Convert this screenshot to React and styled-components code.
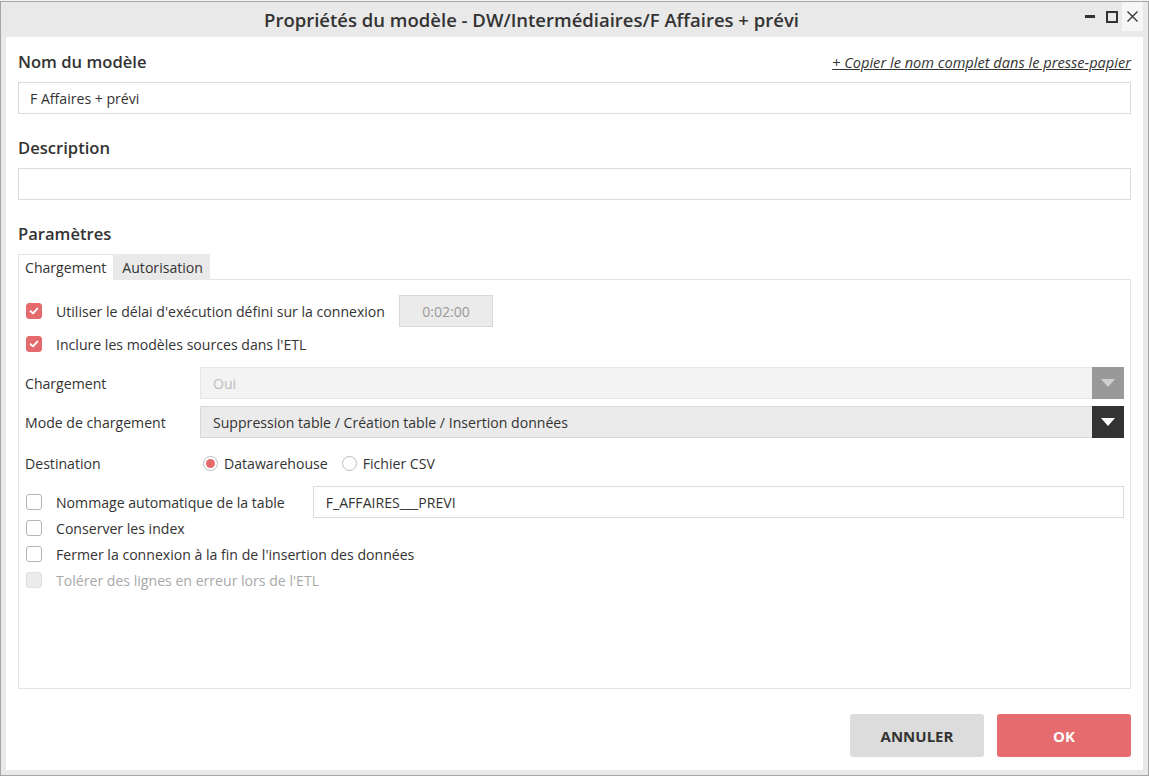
import React from "react";
import styled, { createGlobalStyle } from "styled-components";

const GlobalStyle = createGlobalStyle`
  html, body {
    margin: 0;
    padding: 0;
    background: #f4f4f4;
    font-family: "Open Sans", "Noto Sans", sans-serif;
    color: #333;
  }
  * { box-sizing: border-box; }
`;

const Window = styled.div`
  margin-top: 1px;
  height: calc(100vh - 1px);
  display: flex;
  flex-direction: column;
  background: #e9e9e9;
  border: 1px solid #a6a6a6;
`;

const TitleBar = styled.div`
  height: 35px;
  display: flex;
  align-items: flex-start;
  padding-right: 5px;
  flex-shrink: 0;
`;

const Title = styled.h1`
  flex: 1;
  margin: 0;
  padding-right: 16px;
  height: 35px;
  line-height: 35px;
  text-align: center;
  font-size: 18.5px;
  font-weight: 600;
  color: #333;
`;

const Controls = styled.div`
  display: flex;
  align-items: flex-start;
`;

const CtrlButton = styled.div`
  width: ${(p) => p.$w || 21}px;
  height: 29px;
  display: flex;
  align-items: center;
  justify-content: center;
  background: ${(p) => (p.$close ? "#f6f6f6" : "transparent")};
  svg { display: block; }
`;

const Body = styled.div`
  flex: 1;
  margin: 0 5px 5px;
  background: #fff;
  padding: 12px 12px 13px 12px;
  display: flex;
  flex-direction: column;
  min-height: 0;
`;

const LabelRow = styled.div`
  display: flex;
  align-items: center;
  justify-content: space-between;
  height: 25px;
  margin-top: ${(p) => p.$mt || 0}px;
`;

const Label = styled.h2`
  margin: 0;
  font-size: 16.6px;
  font-weight: 600;
  color: #333;
`;

const CopyLink = styled.a`
  font-size: 14.6px;
  font-style: italic;
  text-decoration: underline;
  color: #333;
  cursor: pointer;
`;

const TextInput = styled.div`
  height: 32px;
  margin-top: 8px;
  border: 1px solid #dcdcdc;
  display: flex;
  align-items: center;
  padding: 0 11px;
  font-size: 14.1px;
  color: #333;
  flex-shrink: 0;
`;

const Tabs = styled.div`
  display: flex;
  margin-top: 8px;
  height: 25px;
  flex-shrink: 0;
`;

const Tab = styled.div`
  padding: 0 7px;
  display: flex;
  align-items: center;
  font-size: 14.1px;
  color: #333;
  background: ${(p) => (p.$active ? "#fff" : "#e9e9e9")};
  border: ${(p) => (p.$active ? "1px solid #e4e4e4" : "none")};
  border-bottom: none;
  padding-left: ${(p) => (p.$active ? 6 : 8)}px;
  position: relative;
  z-index: 1;
  margin-bottom: -1px;
`;

const Panel = styled.div`
  flex: 1;
  border: 1px solid #e4e4e4;
  padding: 15px 6px 0 6px;
  display: flex;
  flex-direction: column;
`;

const Row = styled.div`
  display: flex;
  align-items: center;
  height: ${(p) => p.$h || 26}px;
  margin-top: ${(p) => p.$mt || 0}px;
  font-size: 14.1px;
  color: ${(p) => (p.$disabled ? "#a9a9a9" : "#333")};
`;

const CheckBox = styled.span`
  width: 16px;
  height: 16px;
  margin-left: 1px;
  margin-right: 14px;
  border-radius: 3px;
  flex-shrink: 0;
  display: flex;
  align-items: center;
  justify-content: center;
  background: ${(p) => (p.$checked ? "#e46a6e" : p.$disabled ? "#ececec" : "#fff")};
  border: 1px solid ${(p) => (p.$checked ? "#e46a6e" : p.$disabled ? "#e0e0e0" : "#b5b5b5")};
`;

const TimeInput = styled.div`
  width: 94px;
  height: 32px;
  margin-left: 14px;
  background: #ebebeb;
  border: 1px solid #d8d8d8;
  display: flex;
  align-items: center;
  justify-content: center;
  color: #9a9a9a;
`;

const FieldLabel = styled.div`
  width: 175px;
  flex-shrink: 0;
`;

const Select = styled.div`
  flex: 1;
  height: 32px;
  display: flex;
  align-items: stretch;
  background: ${(p) => (p.$disabled ? "#f3f3f3" : "#ebebeb")};
  border: 1px solid ${(p) => (p.$disabled ? "#e6e6e6" : "#d8d8d8")};
  border-right: none;
  color: ${(p) => (p.$disabled ? "#bdbdbd" : "#333")};
`;

const SelectValue = styled.div`
  flex: 1;
  display: flex;
  align-items: center;
  padding-left: 12px;
`;

const Arrow = styled.div`
  width: 32px;
  margin: -1px 0;
  display: flex;
  align-items: center;
  justify-content: center;
  background: ${(p) => (p.$disabled ? "#999" : "#333")};
`;

const Radio = styled.span`
  width: 15px;
  height: 15px;
  border-radius: 50%;
  border: 1px solid #bdbdbd;
  margin-left: 3px;
  margin-right: 6px;
  display: flex;
  align-items: center;
  justify-content: center;
  &::after {
    content: "";
    display: ${(p) => (p.$checked ? "block" : "none")};
    width: 9px;
    height: 9px;
    border-radius: 50%;
    background: #e46a6e;
  }
`;

const RadioText = styled.span`
  margin-right: 11px;
`;

const NameInput = styled.div`
  flex: 1;
  height: 32px;
  margin-left: 28px;
  border: 1px solid #dcdcdc;
  display: flex;
  align-items: center;
  padding-left: 12px;
`;

const Footer = styled.div`
  display: flex;
  justify-content: flex-end;
  gap: 13px;
  margin-top: 25px;
  flex-shrink: 0;
`;

const Button = styled.button`
  width: 134px;
  height: 43px;
  border: none;
  border-radius: 3px;
  font-family: "Open Sans", "Noto Sans", sans-serif;
  font-size: 15px;
  font-weight: 700;
  background: ${(p) => (p.$primary ? "#e66b6e" : "#dcdcdc")};
  color: ${(p) => (p.$primary ? "#fff" : "#333")};
`;

const Check = () => (
  <svg width="10" height="10" viewBox="0 0 10 10">
    <path d="M1.6 5.2 L4 7.4 L8.4 2.6" fill="none" stroke="#fff" strokeWidth="1.9" strokeLinecap="round" strokeLinejoin="round" />
  </svg>
);

const Triangle = ({ color }) => (
  <svg width="14" height="8" viewBox="0 0 14 8">
    <path d="M0 0 L14 0 L7 8 Z" fill={color} />
  </svg>
);

const CheckRow = ({ checked, disabled, children, mt, h }) => (
  <Row $mt={mt} $h={h} $disabled={disabled}>
    <CheckBox $checked={checked} $disabled={disabled}>
      {checked && <Check />}
    </CheckBox>
    {children}
  </Row>
);

export default function App() {
  return (
    <>
      <GlobalStyle />
      <Window>
        <TitleBar>
          <Title>Propriétés du modèle - DW/Intermédiaires/F Affaires + prévi</Title>
          <Controls>
            <CtrlButton $w={23}>
              <svg width="10" height="3" viewBox="0 0 10 3">
                <rect width="10" height="3" fill="#333" />
              </svg>
            </CtrlButton>
            <CtrlButton $w={21}>
              <svg width="12" height="12" viewBox="0 0 12 12">
                <rect x="1" y="1" width="10" height="10" fill="none" stroke="#333" strokeWidth="2" />
              </svg>
            </CtrlButton>
            <CtrlButton $close $w={21}>
              <svg width="11" height="11" viewBox="0 0 11 11">
                <path d="M0.5 0.5 L10.5 10.5 M10.5 0.5 L0.5 10.5" stroke="#333" strokeWidth="1.3" />
              </svg>
            </CtrlButton>
          </Controls>
        </TitleBar>
        <Body>
          <LabelRow>
            <Label>Nom du modèle</Label>
            <CopyLink>+ Copier le nom complet dans le presse-papier</CopyLink>
          </LabelRow>
          <TextInput>F Affaires + prévi</TextInput>

          <LabelRow $mt={21}>
            <Label>Description</Label>
          </LabelRow>
          <TextInput />

          <LabelRow $mt={21}>
            <Label>Paramètres</Label>
          </LabelRow>
          <Tabs>
            <Tab $active>Chargement</Tab>
            <Tab>Autorisation</Tab>
          </Tabs>
          <Panel>
            <CheckRow checked h={32}>
              Utiliser le délai d'exécution défini sur la connexion
              <TimeInput>0:02:00</TimeInput>
            </CheckRow>
            <CheckRow checked mt={4}>
              Inclure les modèles sources dans l'ETL
            </CheckRow>
            <Row $h={32} $mt={10}>
              <FieldLabel>Chargement</FieldLabel>
              <Select $disabled>
                <SelectValue>Oui</SelectValue>
                <Arrow $disabled>
                  <Triangle color="#cfcfcf" />
                </Arrow>
              </Select>
            </Row>
            <Row $h={32} $mt={7}>
              <FieldLabel>Mode de chargement</FieldLabel>
              <Select>
                <SelectValue>Suppression table / Création table / Insertion données</SelectValue>
                <Arrow>
                  <Triangle color="#fff" />
                </Arrow>
              </Select>
            </Row>
            <Row $mt={12}>
              <FieldLabel>Destination</FieldLabel>
              <Radio $checked />
              <RadioText>Datawarehouse</RadioText>
              <Radio />
              <RadioText>Fichier CSV</RadioText>
            </Row>
            <CheckRow mt={13}>
              Nommage automatique de la table
              <NameInput>F_AFFAIRES___PREVI</NameInput>
            </CheckRow>
            <CheckRow>Conserver les index</CheckRow>
            <CheckRow>Fermer la connexion à la fin de l'insertion des données</CheckRow>
            <CheckRow disabled>Tolérer des lignes en erreur lors de l'ETL</CheckRow>
          </Panel>
          <Footer>
            <Button>ANNULER</Button>
            <Button $primary>OK</Button>
          </Footer>
        </Body>
      </Window>
    </>
  );
}
